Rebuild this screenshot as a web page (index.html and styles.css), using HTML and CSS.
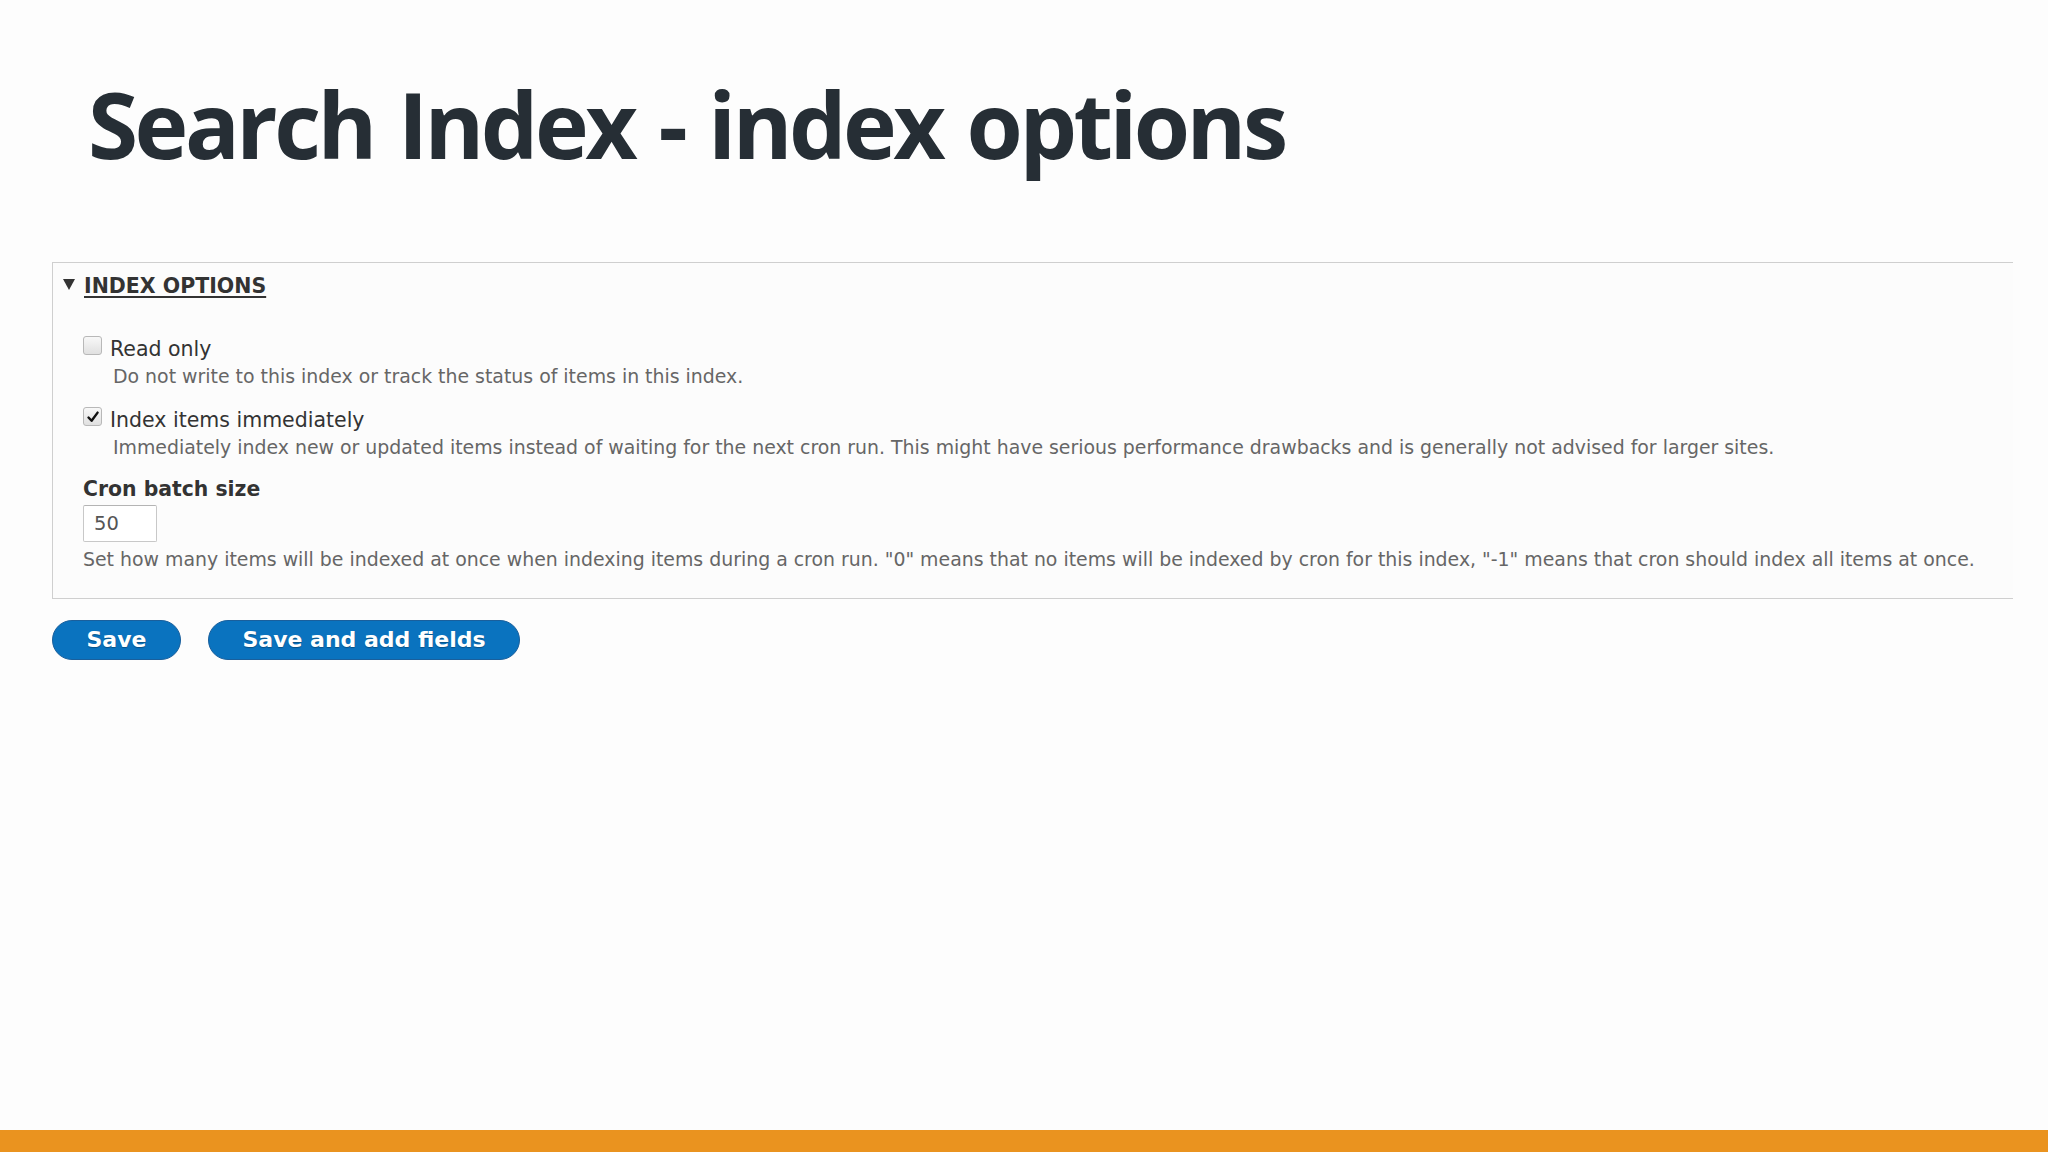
FILE: index.html
```html
<!DOCTYPE html>
<html lang="en">
<head>
  <meta charset="UTF-8">
  <meta name="viewport" content="width=device-width, initial-scale=1.0">
  <title>Search Index - index options</title>
  <link rel="stylesheet" href="styles.css">
</head>
<body>
  <main class="slide">
    <h1 class="slide__title">Search Index - index options</h1>
    <form class="index-form">
      <details class="options" open>
        <summary class="options__summary">
          <span class="options__arrow"></span>
          <span class="options__title">INDEX OPTIONS</span>
        </summary>
        <div class="options__body">
          <div class="check">
            <span class="check__box"></span>
            <div class="check__text">
              <label class="check__label">Read only</label>
              <div class="description">Do not write to this index or track the status of items in this index.</div>
            </div>
          </div>
          <div class="check check--second">
            <span class="check__box">
              <svg viewBox="0 0 18 18" width="18" height="18"><path d="M4.5 9.5 L7.6 12.8 L13.6 4.6" fill="none" stroke="#111" stroke-width="2.4" stroke-linecap="round" stroke-linejoin="round"/></svg>
            </span>
            <div class="check__text">
              <label class="check__label">Index items immediately</label>
              <div class="description">Immediately index new or updated items instead of waiting for the next cron run. This might have serious performance drawbacks and is generally not advised for larger sites.</div>
            </div>
          </div>
          <div class="field">
            <label class="field__label">Cron batch size</label>
            <input class="field__input" type="text" value="50">
            <div class="description">Set how many items will be indexed at once when indexing items during a cron run. "0" means that no items will be indexed by cron for this index, "-1" means that cron should index all items at once.</div>
          </div>
        </div>
      </details>
      <div class="actions">
        <button class="button" type="button">Save</button>
        <button class="button" type="button">Save and add fields</button>
      </div>
    </form>
  </main>
  <div class="slide__bar"></div>
</body>
</html>
```

FILE: styles.css
```css
* {
  margin: 0;
  padding: 0;
  box-sizing: border-box;
}

html,
body {
  height: 100%;
}

body {
  display: flex;
  flex-direction: column;
  background: #fdfdfd;
  font-family: "DejaVu Sans", Verdana, sans-serif;
  color: #333;
}

.slide {
  flex: 1;
}

.slide__title {
  margin-top: 79px;
  padding-left: 88px;
  font-family: "Open Sans", "Liberation Sans", sans-serif;
  font-weight: 700;
  font-size: 91px;
  line-height: 91px;
  letter-spacing: -3.5px;
  word-spacing: 4px;
  color: #262e35;
}

.index-form {
  margin: 92px 35px 0 52px;
}

.options {
  border: 1px solid #cfcfcf;
  border-right: 0;
  background: #fcfcfc;
}

.options__summary {
  display: flex;
  align-items: flex-start;
  padding: 11px 10px 0;
  list-style: none;
  cursor: pointer;
}

.options__summary::-webkit-details-marker {
  display: none;
}

.options__arrow {
  margin-top: 5px;
  margin-right: 9px;
  width: 0;
  height: 0;
  border-left: 6px solid transparent;
  border-right: 6px solid transparent;
  border-top: 11px solid #333;
}

.options__title {
  font-weight: 700;
  font-size: 20.5px;
  line-height: 24px;
  text-decoration: underline;
  text-underline-offset: 3px;
  color: #333;
}

.options__body {
  padding: 39px 0 28px 30px;
}

.check {
  display: flex;
  align-items: flex-start;
}

.check--second {
  margin-top: 21px;
}

.check__box {
  flex: none;
  display: flex;
  margin-top: -1px;
  margin-right: 8px;
  width: 19px;
  height: 19px;
  border: 1px solid #b8b8b8;
  border-radius: 3px;
  background: linear-gradient(#f8f8f8, #e0e0e0);
}

.check__box svg {
  margin: -0.5px;
}

.check__label {
  display: block;
  font-size: 20.5px;
  line-height: 24px;
  color: #333;
}

.description {
  font-size: 18.9px;
  line-height: 22px;
  color: #666;
}

.check .description {
  margin: 4px 0 0 3px;
}

.field {
  margin-top: 19px;
}

.field__label {
  display: block;
  font-weight: 700;
  font-size: 20.4px;
  line-height: 24px;
  color: #333;
}

.field__input {
  display: block;
  margin: 4px 0 6px;
  padding: 0 10px;
  width: 74px;
  height: 37px;
  border: 1px solid #c8c8c8;
  border-top-color: #b4b4b4;
  border-radius: 2px;
  background: #fff;
  font-family: "DejaVu Sans", Verdana, sans-serif;
  font-size: 19.5px;
  color: #555;
}

.actions {
  display: flex;
  gap: 27px;
  margin-top: 21px;
}

.button {
  height: 40px;
  padding: 0 33.5px;
  border: 1px solid #1a5f9c;
  border-radius: 20px;
  background: #0a73bf;
  font-family: "DejaVu Sans", Verdana, sans-serif;
  font-weight: 700;
  font-size: 22px;
  line-height: 38px;
  color: #fff;
  text-shadow: 0 1px 1px rgba(0, 0, 0, 0.3);
  cursor: pointer;
}

.slide__bar {
  flex: none;
  height: 22px;
  background: #ea931f;
}
```
